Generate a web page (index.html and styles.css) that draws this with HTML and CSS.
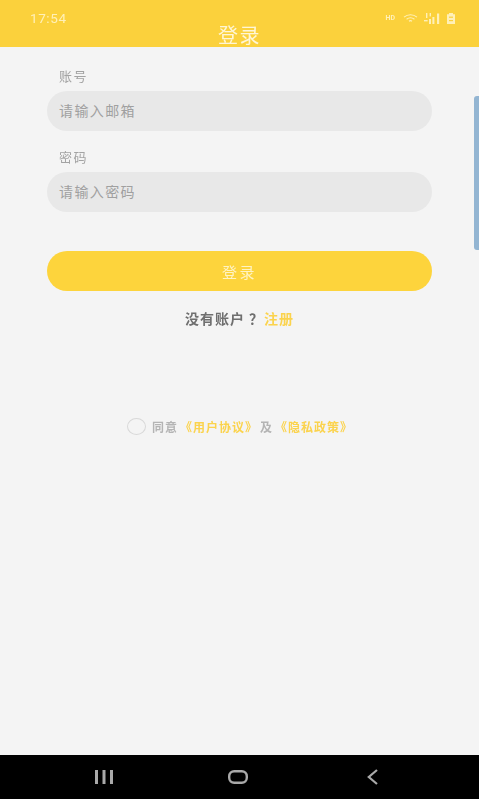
FILE: index.html
```html
<!DOCTYPE html>
<html lang="zh-CN">

<head>
    <meta charset="UTF-8">
    <meta name="viewport" content="width=device-width, initial-scale=1.0">
    <title>登录</title>
    <link rel="stylesheet" href="styles.css">
</head>

<body>
    <div class="screen">
        <header class="top-bar">
            <div class="status-bar">
                <span class="clock">17:54</span>
                <div class="status-icons">
                    <span class="hd">HD</span>
                    <svg width="15" height="9" viewBox="0 0 15 9" fill="none" stroke="currentColor" stroke-width="1.1">
                        <path d="M1 3.2C4.8 0 10.2 0 14 3.2" />
                        <path d="M3.6 5.2C6 3.4 9 3.4 11.4 5.2" />
                        <path d="M6 7.2C6.9 6.5 8.1 6.5 9 7.2" />
                    </svg>
                    <svg width="16" height="11" viewBox="0 0 16 11" fill="currentColor">
                        <rect x="5" y="6" width="2" height="5" />
                        <rect x="8.4" y="4" width="2" height="7" />
                        <rect x="13" y="0.5" width="2.2" height="10.5" />
                        <rect x="0" y="7" width="3.6" height="1.4" />
                        <rect x="2" y="0" width="1.4" height="5" />
                        <rect x="5.6" y="0" width="1.4" height="3.4" />
                    </svg>
                    <svg width="10" height="11" viewBox="0 0 10 11" fill="currentColor">
                        <path d="M3 0H7V1.2H9V11H1V1.2H3Z" />
                        <rect x="3" y="3.6" width="4" height="1.2" fill="#fbd13c" />
                        <rect x="3" y="7" width="4" height="1.2" fill="#fbd13c" />
                    </svg>
                </div>
            </div>
            <h1 class="page-title">登录</h1>
        </header>

        <main class="content">
            <form class="login-form">
                <label class="field-label">账号</label>
                <div class="field">请输入邮箱</div>
                <label class="field-label">密码</label>
                <div class="field">请输入密码</div>
                <button class="submit-btn" type="button">登录</button>
            </form>

            <p class="register">没有账户 ？<a class="link" href="#">注册</a></p>

            <div class="agreement">
                <span class="radio"></span>
                <span>同意</span>
                <a class="link" href="#">《用户协议》</a>
                <span>及</span>
                <a class="link" href="#">《隐私政策》</a>
            </div>

            <div class="scroll-tab"></div>
        </main>

        <nav class="nav-bar">
            <svg width="18" height="14" viewBox="0 0 18 14" fill="#a9a9a9">
                <rect x="0" y="0" width="3" height="14" />
                <rect x="7.5" y="0" width="3" height="14" />
                <rect x="15" y="0" width="3" height="14" />
            </svg>
            <svg width="20" height="14" viewBox="0 0 20 14" fill="none" stroke="#a9a9a9" stroke-width="2.4">
                <rect x="1.2" y="1.2" width="17.6" height="11.6" rx="5" />
            </svg>
            <svg width="11" height="16" viewBox="0 0 11 16" fill="none" stroke="#a9a9a9" stroke-width="2.2">
                <path d="M10 1L1.8 8L10 15" />
            </svg>
        </nav>
    </div>
</body>

</html>
```

FILE: styles.css
```css
* {
    margin: 0;
    padding: 0;
    box-sizing: border-box;
}

body {
    font-family: 'Noto Sans CJK SC', 'Roboto', sans-serif;
    background: #f4f4f4;
    overflow: hidden;
}

.screen {
    height: 100vh;
    display: flex;
    flex-direction: column;
}

.top-bar {
    height: 47px;
    background: #fbd13c;
    color: #fff0b8;
}

.status-bar {
    height: 25px;
    padding: 11px 23px 0 30px;
    display: flex;
    align-items: center;
    justify-content: space-between;
    filter: blur(0.4px);
}

.clock {
    font-family: 'Roboto', sans-serif;
    font-size: 13.5px;
    letter-spacing: 0.6px;
}

.status-icons {
    display: flex;
    align-items: center;
    gap: 6px;
}

.hd {
    font-family: 'Roboto', sans-serif;
    font-size: 7px;
    font-weight: 700;
    margin-right: 2px;
}

.page-title {
    height: 20px;
    font-size: 20px;
    line-height: 20px;
    font-weight: 400;
    text-align: center;
    letter-spacing: 1.5px;
    color: #fff6d6;
    filter: blur(0.3px);
}

.content {
    flex: 1;
    position: relative;
}

.login-form {
    padding: 21px 47px 0;
    display: flex;
    flex-direction: column;
}

.field-label {
    height: 18px;
    margin: 0 0 5px 12px;
    font-size: 13px;
    line-height: 16px;
    letter-spacing: 1.5px;
    color: #a3a3a3;
    filter: blur(0.3px);
}

.field {
    height: 40px;
    margin-bottom: 18px;
    padding-left: 12px;
    border-radius: 20px;
    background: #e8e8e8;
    font-size: 14px;
    line-height: 38px;
    letter-spacing: 1.4px;
    color: #a0a0a0;
}

.submit-btn {
    height: 40px;
    margin-top: 21px;
    border: none;
    border-radius: 20px;
    background: #fdd43c;
    color: #fff3c4;
    font-family: inherit;
    font-size: 15px;
    letter-spacing: 2.5px;
    filter: blur(0.2px);
}

.register {
    margin-top: 18px;
    height: 20px;
    font-size: 14px;
    line-height: 18px;
    font-weight: 700;
    letter-spacing: 1px;
    text-align: center;
    color: #6f6f6f;
    filter: blur(0.3px);
}

.link {
    color: #fbd34d;
    text-decoration: none;
}

.agreement {
    margin-top: 87px;
    height: 20px;
    padding-left: 1px;
    display: flex;
    align-items: center;
    justify-content: center;
    gap: 2px;
    font-size: 12px;
    letter-spacing: 1px;
    font-weight: 700;
    color: #b4b4b4;
    filter: blur(0.3px);
}

.radio {
    width: 19px;
    height: 17px;
    margin-right: 4px;
    border: 1.5px solid #d8d8d8;
    border-radius: 50%;
}

.scroll-tab {
    position: absolute;
    top: 49px;
    right: 0;
    width: 5px;
    height: 154px;
    border-radius: 3px 0 0 3px;
    background: #93b5d2;
}

.nav-bar {
    height: 44px;
    padding-left: 37px;
    background: #000;
    display: grid;
    grid-template-columns: repeat(3, 134px);
    align-items: center;
    justify-items: center;
}
```
